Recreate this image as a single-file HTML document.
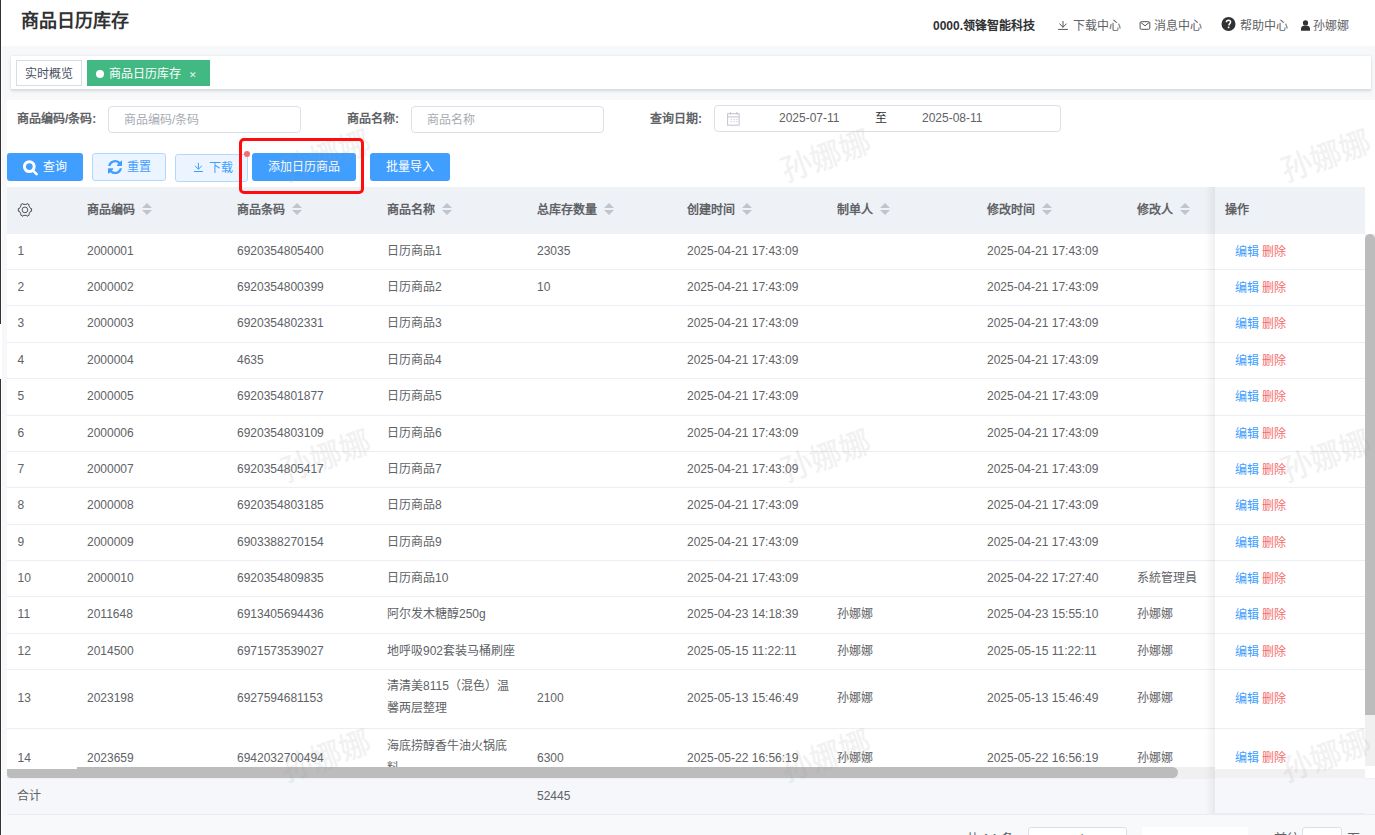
<!DOCTYPE html>
<html lang="zh-CN">
<head>
<meta charset="utf-8">
<style>
*{margin:0;padding:0;box-sizing:border-box}
html,body{width:1375px;height:835px;overflow:hidden;background:#fff}
body{position:relative;font-family:"Liberation Sans",sans-serif;color:#606266;font-size:12px}
.lline{position:absolute;left:0;width:1px;background:#333}
.gray{position:absolute;left:2px;right:0;top:46px;bottom:0;background:#f7f8fa}
.title{position:absolute;left:21px;top:9px;font-size:18px;font-weight:bold;color:#303133;line-height:24px}
.ico{position:absolute}
.hdr{position:absolute;top:17px;line-height:18px;font-size:12px;color:#606266;white-space:nowrap}
.tabbar{position:absolute;left:11px;top:56px;width:1360px;height:34px;background:#fff;border-bottom:1px solid #d8dce5;box-shadow:0 1px 3px 0 rgba(0,0,0,.12),0 0 3px 0 rgba(0,0,0,.04)}
.tab1{position:absolute;left:16px;top:60px;width:66px;height:26px;border:1px solid #d8dce5;background:#fff;color:#495060;font-size:12px;line-height:27.5px;text-align:center}
.tab2{position:absolute;left:87px;top:60px;width:123px;height:26px;background:#42b983;color:#fff;font-size:12px;line-height:27px}
.tab2 .dot{position:absolute;left:9px;top:9.9px;width:8px;height:8px;border-radius:50%;background:#fff}
.tab2 .tx{position:absolute;left:22.3px;top:1px}
.tab2 .x{position:absolute;left:102.3px;top:1.5px;font-size:9px;color:#e8f5ee}
.panel{position:absolute;left:7px;top:100px;right:0;bottom:0;background:#fff}
.lbl{position:absolute;top:110px;font-size:12px;font-weight:bold;color:#606266;line-height:18px;white-space:nowrap}
.inp{position:absolute;top:106px;height:27px;border:1px solid #dcdfe6;border-radius:4px;background:#fff;color:#c0c4cc;font-size:12px;line-height:25px;white-space:nowrap}
.ph{position:relative;top:1.3px;color:#a8abb2}
.btn{position:absolute;top:153px;height:28px;border-radius:3px;font-size:12px;line-height:28px;text-align:center;color:#fff;background:#409eff;white-space:nowrap}
.bt{position:absolute;top:0}
.btnp{background:#ecf5ff;border:1px solid #b3d8ff;color:#409eff;line-height:26px}
.table{position:absolute;left:7px;top:187px;width:1358px;height:580.2px;overflow:hidden;background:#fff}
.th{position:absolute;left:0;top:0;height:46.6px;width:100%;background:#eef1f6}
.th span{position:absolute;top:14px;font-weight:bold;color:#606266;line-height:18px;white-space:nowrap}
.gear{position:absolute}
.sort{display:inline-block;position:relative;width:10px;height:14px;margin-left:6.5px;vertical-align:-3px}
.sort b{position:absolute;left:0;width:0;height:0;border-left:5px solid transparent;border-right:5px solid transparent}
.sort .up{top:0;border-bottom:5px solid #c0c4cc}
.sort .dn{top:7px;border-top:5px solid #c0c4cc}
.row{position:absolute;left:0;width:100%;border-bottom:1px solid #ebeef5;background:#fff}
.row span{position:absolute;white-space:nowrap;line-height:18px;color:#606266}
.row span.nm{line-height:22px}
.fix{position:absolute;left:1215px;top:187px;width:150px;height:627.4px;background:#fff;overflow:hidden}
.fshadow{position:absolute;left:1205px;top:187px;width:10px;height:627.4px;background:linear-gradient(to right,rgba(0,0,0,0),rgba(0,0,0,.06))}
.fix .fh{position:absolute;left:0;top:0;width:100%;height:46.6px;background:#eef1f6}
.fix .fh span{position:absolute;left:10px;top:14px;font-weight:bold;line-height:18px}
.fix .fr{position:absolute;left:0;width:100%;border-bottom:1px solid #ebeef5;background:#fff}
.fix .fr span{position:absolute;left:20px;line-height:18px;white-space:nowrap}
.ed{color:#409eff}.de{color:#f56c6c}
.hscroll{position:absolute;left:7px;top:767.2px;width:1208px;height:10.6px;background:#f0f0f0}
.hthumb{position:absolute;left:0;top:0;width:1171px;height:100%;background:#bcbcbc;border-radius:0 6px 6px 4px}
.hnotch{position:absolute;left:0;top:0;width:70px;height:1.6px;background:#fff}
.vscroll{position:absolute;left:1365px;top:233.6px;width:10px;height:532.7px;background:#f0f0f0}
.vthumb{position:absolute;left:0;top:0;width:100%;height:481px;background:#bcbcbc;border-radius:6px 6px 0 0}
.sum{position:absolute;left:7px;top:777.8px;width:1368px;height:36.8px;background:#f5f7fa;border-bottom:1px solid #e9ecf2;border-top:1px solid #eef0f5}
.pg{position:absolute;left:2px;top:814.6px;right:0;bottom:0;background:#f8f9fb}
.pbox{position:absolute;top:827.4px;height:30px;background:#fff;border:1px solid #dcdfe6;border-radius:3px}
.ptx{position:absolute;top:830.4px;font-size:13px;line-height:18px;color:#606266;white-space:nowrap}
.sum span{position:absolute;top:8.2px;line-height:18px;color:#606266}
.redbox{position:absolute;left:238.5px;top:137.5px;width:125px;height:56px;border:3px solid #ff0d0d;border-radius:5px}
.reddot{position:absolute;left:243.5px;top:151px;width:6px;height:6px;border-radius:50%;background:#f56c6c}
.wm{position:absolute;font-size:31px;font-weight:400;color:#a0a0a0;-webkit-text-stroke:.35px #a0a0a0;opacity:.14;transform:rotate(-20deg);white-space:nowrap;pointer-events:none;line-height:30px}
</style>
</head>
<body>
<div class="gray"></div>
<div class="lline" style="top:0;height:324px"></div>
<div class="lline" style="top:379px;height:456px"></div>
<div class="title">商品日历库存</div>
<div class="hdr" style="left:933px;font-weight:bold;color:#303133">0000.领锋智能科技</div>
<svg class="ico" style="left:1056px;top:19px" width="14" height="14" viewBox="0 0 14 14"><path d="M7 2v6.5M3.4 4.6L7 8.2l3.6-3.6M2.1 10.4h9.8" fill="none" stroke="#555" stroke-width="1"/></svg>
<div class="hdr" style="left:1072.6px">下载中心</div>
<svg class="ico" style="left:1138px;top:20px" width="14" height="11" viewBox="0 0 14 11"><rect x="2.1" y="1.7" width="9.7" height="7.6" rx="1.2" fill="none" stroke="#555" stroke-width="1"/><path d="M3 2.6l4 3.2 4-3.2" fill="none" stroke="#555" stroke-width="1"/></svg>
<div class="hdr" style="left:1154.3px">消息中心</div>
<svg class="ico" style="left:1221px;top:17px" width="15" height="15" viewBox="0 0 15 15"><circle cx="7.5" cy="7" r="7" fill="#303133"/><path d="M5.4 5.3c0-1.3.9-2.1 2.1-2.1 1.3 0 2.1.8 2.1 1.9 0 1.4-1.6 1.6-1.6 2.9v.4" fill="none" stroke="#fff" stroke-width="1.5"/><rect x="6.8" y="9.6" width="1.6" height="1.6" fill="#fff"/></svg>
<div class="hdr" style="left:1240px">帮助中心</div>
<svg class="ico" style="left:1300px;top:19px" width="11" height="13" viewBox="0 0 11 13"><circle cx="5.5" cy="3.9" r="2.6" fill="#303133"/><path d="M1 11.8V9.6C1 7.8 2.4 6.7 4 6.7h3c1.6 0 3 1.1 3 2.9v2.2z" fill="#303133"/></svg>
<div class="hdr" style="left:1312.7px">孙娜娜</div>
<div class="tabbar"></div>
<div class="tab1">实时概览</div>
<div class="tab2"><i class="dot"></i><span class="tx">商品日历库存</span><span class="x">✕</span></div>
<div class="panel"></div>
<div class="lbl" style="left:17px">商品编码/条码:</div>
<div class="inp" style="left:108px;width:193px;padding-left:15px"><span class="ph">商品编码/条码</span></div>
<div class="lbl" style="left:347px">商品名称:</div>
<div class="inp" style="left:411px;width:193px;padding-left:15px"><span class="ph">商品名称</span></div>
<div class="lbl" style="left:650px">查询日期:</div>
<div class="inp" style="left:714px;top:105.2px;width:347px;color:#606266">
 <svg style="position:absolute;left:11px;top:4px" width="14" height="16" viewBox="0 0 14 16"><rect x="1.6" y="3.7" width="11.5" height="11.5" fill="none" stroke="#c0c4cc" stroke-width="1"/><path d="M1.6 6.9h11.5M4.4 2v2.5M10.9 2v2.5" stroke="#c0c4cc" stroke-width="1"/><path d="M4.5 9.4h1.2M7.5 9.4h1.2M10.3 9.4h1.2M4.5 11.6h1.2M7.5 11.6h1.2M10.3 11.6h1.2" stroke="#c0c4cc" stroke-width=".9"/></svg><span style="position:absolute;left:64px">2025-07-11</span>
 <span style="position:absolute;left:160px;color:#303133">至</span>
 <span style="position:absolute;left:207px">2025-08-11</span>
</div>
<div class="btn" style="left:7px;width:76px"><span class="bt" style="left:36px">查询</span><svg class="ico" style="left:15px;top:5px" width="18" height="18" viewBox="0 0 18 18"><circle cx="7.3" cy="8.6" r="4.9" fill="none" stroke="#fff" stroke-width="3"/><path d="M11.3 12.8l3.3 3.3" stroke="#fff" stroke-width="2.6" stroke-linecap="round"/></svg></div>
<div class="btn btnp" style="left:92px;width:74px"><span class="bt" style="left:33.8px">重置</span><svg class="ico" style="left:14.7px;top:5.9px" width="14.2" height="14.2" viewBox="0 0 1536 1536"><path fill="#409eff" d="M1511 928q0 5-1 7q-64 268-268 434.5T764 1536q-146 0-282.5-55T238 1324l-129 129q-19 19-45 19t-45-19t-19-45V960q0-26 19-45t45-19h448q26 0 45 19t19 45t-19 45l-137 137q71 66 161 102t187 36q134 0 250-65t186-179q11-17 53-117q8-23 30-23h192q13 0 22.5 9.5t9.5 22.5zm25-800v448q0 26-19 45t-45 19h-448q-26 0-45-19t-19-45t19-45l138-138Q969 256 768 256q-134 0-250 65T332 500q-11 17-53 117q-8 23-30 23H50q-13 0-22.5-9.5T18 608v-7q65-268 270-434.5T768 0q146 0 284 55.5T1297 212l130-129q19-19 45-19t45 19t19 45z"/></svg></div>
<div class="btn btnp" style="left:175px;width:73px;top:154px"><span class="bt" style="left:32.8px">下载</span><svg class="ico" style="left:16px;top:6px" width="12" height="14" viewBox="0 0 12 14"><path d="M6.4 1.9v6.4M3 4.8l3.4 3.4 3.5-3.4M1.9 10.5h9" fill="none" stroke="#409eff" stroke-width="1"/></svg></div>
<div class="btn" style="left:252px;width:104px">添加日历商品</div>
<div class="btn" style="left:370px;width:80px">批量导入</div>

<div class="table">
<div class="th">
<svg class="gear" style="left:9px;top:14px" width="18" height="18" viewBox="0 0 18 18"><path d="M15.55 7.50 L15.55 10.30 L14.61 10.09 L12.81 13.21 L13.46 13.92 L11.04 15.32 L10.75 14.40 L7.15 14.40 L6.86 15.32 L4.44 13.92 L5.09 13.21 L3.29 10.09 L2.35 10.30 L2.35 7.50 L3.29 7.71 L5.09 4.59 L4.44 3.88 L6.86 2.48 L7.15 3.40 L10.75 3.40 L11.04 2.48 L13.46 3.88 L12.81 4.59 L14.61 7.71Z" fill="none" stroke="#555" stroke-width="1"/><circle cx="8.95" cy="8.9" r="2.85" fill="none" stroke="#555" stroke-width="1"/></svg>
<span style="left:80px">商品编码<i class="sort"><b class="up"></b><b class="dn"></b></i></span>
<span style="left:230px">商品条码<i class="sort"><b class="up"></b><b class="dn"></b></i></span>
<span style="left:380px">商品名称<i class="sort"><b class="up"></b><b class="dn"></b></i></span>
<span style="left:530px">总库存数量<i class="sort"><b class="up"></b><b class="dn"></b></i></span>
<span style="left:680px">创建时间<i class="sort"><b class="up"></b><b class="dn"></b></i></span>
<span style="left:830px">制单人<i class="sort"><b class="up"></b><b class="dn"></b></i></span>
<span style="left:980px">修改时间<i class="sort"><b class="up"></b><b class="dn"></b></i></span>
<span style="left:1130px">修改人<i class="sort"><b class="up"></b><b class="dn"></b></i></span>
</div>
<div class="row" style="top:47.00px;height:36.00px">
<span style="left:10.6px;top:7.90px">1</span>
<span style="left:80px;top:7.90px">2000001</span>
<span style="left:230px;top:7.90px">6920354805400</span>
<span style="left:380px;top:7.90px">日历商品1</span>
<span style="left:530px;top:7.90px">23035</span>
<span style="left:680px;top:7.90px">2025-04-21 17:43:09</span>
<span style="left:980px;top:7.90px">2025-04-21 17:43:09</span>
</div>
<div class="row" style="top:83.00px;height:36.00px">
<span style="left:10.6px;top:7.90px">2</span>
<span style="left:80px;top:7.90px">2000002</span>
<span style="left:230px;top:7.90px">6920354800399</span>
<span style="left:380px;top:7.90px">日历商品2</span>
<span style="left:530px;top:7.90px">10</span>
<span style="left:680px;top:7.90px">2025-04-21 17:43:09</span>
<span style="left:980px;top:7.90px">2025-04-21 17:43:09</span>
</div>
<div class="row" style="top:119.00px;height:37.00px">
<span style="left:10.6px;top:8.40px">3</span>
<span style="left:80px;top:8.40px">2000003</span>
<span style="left:230px;top:8.40px">6920354802331</span>
<span style="left:380px;top:8.40px">日历商品3</span>
<span style="left:680px;top:8.40px">2025-04-21 17:43:09</span>
<span style="left:980px;top:8.40px">2025-04-21 17:43:09</span>
</div>
<div class="row" style="top:156.00px;height:36.00px">
<span style="left:10.6px;top:7.90px">4</span>
<span style="left:80px;top:7.90px">2000004</span>
<span style="left:230px;top:7.90px">4635</span>
<span style="left:380px;top:7.90px">日历商品4</span>
<span style="left:680px;top:7.90px">2025-04-21 17:43:09</span>
<span style="left:980px;top:7.90px">2025-04-21 17:43:09</span>
</div>
<div class="row" style="top:192.00px;height:37.00px">
<span style="left:10.6px;top:8.40px">5</span>
<span style="left:80px;top:8.40px">2000005</span>
<span style="left:230px;top:8.40px">6920354801877</span>
<span style="left:380px;top:8.40px">日历商品5</span>
<span style="left:680px;top:8.40px">2025-04-21 17:43:09</span>
<span style="left:980px;top:8.40px">2025-04-21 17:43:09</span>
</div>
<div class="row" style="top:229.00px;height:36.00px">
<span style="left:10.6px;top:7.90px">6</span>
<span style="left:80px;top:7.90px">2000006</span>
<span style="left:230px;top:7.90px">6920354803109</span>
<span style="left:380px;top:7.90px">日历商品6</span>
<span style="left:680px;top:7.90px">2025-04-21 17:43:09</span>
<span style="left:980px;top:7.90px">2025-04-21 17:43:09</span>
</div>
<div class="row" style="top:265.00px;height:36.00px">
<span style="left:10.6px;top:7.90px">7</span>
<span style="left:80px;top:7.90px">2000007</span>
<span style="left:230px;top:7.90px">6920354805417</span>
<span style="left:380px;top:7.90px">日历商品7</span>
<span style="left:680px;top:7.90px">2025-04-21 17:43:09</span>
<span style="left:980px;top:7.90px">2025-04-21 17:43:09</span>
</div>
<div class="row" style="top:301.00px;height:37.00px">
<span style="left:10.6px;top:8.40px">8</span>
<span style="left:80px;top:8.40px">2000008</span>
<span style="left:230px;top:8.40px">6920354803185</span>
<span style="left:380px;top:8.40px">日历商品8</span>
<span style="left:680px;top:8.40px">2025-04-21 17:43:09</span>
<span style="left:980px;top:8.40px">2025-04-21 17:43:09</span>
</div>
<div class="row" style="top:338.00px;height:36.00px">
<span style="left:10.6px;top:7.90px">9</span>
<span style="left:80px;top:7.90px">2000009</span>
<span style="left:230px;top:7.90px">6903388270154</span>
<span style="left:380px;top:7.90px">日历商品9</span>
<span style="left:680px;top:7.90px">2025-04-21 17:43:09</span>
<span style="left:980px;top:7.90px">2025-04-21 17:43:09</span>
</div>
<div class="row" style="top:374.00px;height:36.00px">
<span style="left:10.6px;top:7.90px">10</span>
<span style="left:80px;top:7.90px">2000010</span>
<span style="left:230px;top:7.90px">6920354809835</span>
<span style="left:380px;top:7.90px">日历商品10</span>
<span style="left:680px;top:7.90px">2025-04-21 17:43:09</span>
<span style="left:980px;top:7.90px">2025-04-22 17:27:40</span>
<span style="left:1130px;top:7.90px">系統管理員</span>
</div>
<div class="row" style="top:410.00px;height:37.00px">
<span style="left:10.6px;top:8.40px">11</span>
<span style="left:80px;top:8.40px">2011648</span>
<span style="left:230px;top:8.40px">6913405694436</span>
<span style="left:380px;top:8.40px">阿尔发木糖醇250g</span>
<span style="left:680px;top:8.40px">2025-04-23 14:18:39</span>
<span style="left:830px;top:8.40px">孙娜娜</span>
<span style="left:980px;top:8.40px">2025-04-23 15:55:10</span>
<span style="left:1130px;top:8.40px">孙娜娜</span>
</div>
<div class="row" style="top:447.00px;height:36.00px">
<span style="left:10.6px;top:7.90px">12</span>
<span style="left:80px;top:7.90px">2014500</span>
<span style="left:230px;top:7.90px">6971573539027</span>
<span style="left:380px;top:7.90px">地呼吸902套装马桶刷座</span>
<span style="left:680px;top:7.90px">2025-05-15 11:22:11</span>
<span style="left:830px;top:7.90px">孙娜娜</span>
<span style="left:980px;top:7.90px">2025-05-15 11:22:11</span>
<span style="left:1130px;top:7.90px">孙娜娜</span>
</div>
<div class="row" style="top:483.00px;height:59.00px">
<span style="left:10.6px;top:19.40px">13</span>
<span style="left:80px;top:19.40px">2023198</span>
<span style="left:230px;top:19.40px">6927594681153</span>
<span class="nm" style="left:380px;top:5.40px">清清美8115（混色）温<br>馨两层整理</span>
<span style="left:530px;top:19.40px">2100</span>
<span style="left:680px;top:19.40px">2025-05-13 15:46:49</span>
<span style="left:830px;top:19.40px">孙娜娜</span>
<span style="left:980px;top:19.40px">2025-05-13 15:46:49</span>
<span style="left:1130px;top:19.40px">孙娜娜</span>
</div>
<div class="row" style="top:542.00px;height:61.00px">
<span style="left:10.6px;top:19.50px">14</span>
<span style="left:80px;top:19.50px">2023659</span>
<span style="left:230px;top:19.50px">6942032700494</span>
<span class="nm" style="left:380px;top:5.50px">海底捞醇香牛油火锅底<br>料</span>
<span style="left:530px;top:19.50px">6300</span>
<span style="left:680px;top:19.50px">2025-05-22 16:56:19</span>
<span style="left:830px;top:19.50px">孙娜娜</span>
<span style="left:980px;top:19.50px">2025-05-22 16:56:19</span>
<span style="left:1130px;top:19.50px">孙娜娜</span>
</div>
</div>
<div class="sum"><span style="left:9.8px">合计</span><span style="left:530px">52445</span></div>
<div class="hscroll"><div class="hthumb"></div><div class="hnotch"></div></div>
<div class="fshadow"></div>
<div class="fix"><div class="fh"><span>操作</span></div>
<div class="fr" style="top:47.00px;height:36.00px"><span style="top:8.80px"><b class="ed" style="font-weight:normal">编辑</b> <b class="de" style="font-weight:normal">删除</b></span></div>
<div class="fr" style="top:83.00px;height:36.00px"><span style="top:8.80px"><b class="ed" style="font-weight:normal">编辑</b> <b class="de" style="font-weight:normal">删除</b></span></div>
<div class="fr" style="top:119.00px;height:37.00px"><span style="top:9.30px"><b class="ed" style="font-weight:normal">编辑</b> <b class="de" style="font-weight:normal">删除</b></span></div>
<div class="fr" style="top:156.00px;height:36.00px"><span style="top:8.80px"><b class="ed" style="font-weight:normal">编辑</b> <b class="de" style="font-weight:normal">删除</b></span></div>
<div class="fr" style="top:192.00px;height:37.00px"><span style="top:9.30px"><b class="ed" style="font-weight:normal">编辑</b> <b class="de" style="font-weight:normal">删除</b></span></div>
<div class="fr" style="top:229.00px;height:36.00px"><span style="top:8.80px"><b class="ed" style="font-weight:normal">编辑</b> <b class="de" style="font-weight:normal">删除</b></span></div>
<div class="fr" style="top:265.00px;height:36.00px"><span style="top:8.80px"><b class="ed" style="font-weight:normal">编辑</b> <b class="de" style="font-weight:normal">删除</b></span></div>
<div class="fr" style="top:301.00px;height:37.00px"><span style="top:9.30px"><b class="ed" style="font-weight:normal">编辑</b> <b class="de" style="font-weight:normal">删除</b></span></div>
<div class="fr" style="top:338.00px;height:36.00px"><span style="top:8.80px"><b class="ed" style="font-weight:normal">编辑</b> <b class="de" style="font-weight:normal">删除</b></span></div>
<div class="fr" style="top:374.00px;height:36.00px"><span style="top:8.80px"><b class="ed" style="font-weight:normal">编辑</b> <b class="de" style="font-weight:normal">删除</b></span></div>
<div class="fr" style="top:410.00px;height:37.00px"><span style="top:9.30px"><b class="ed" style="font-weight:normal">编辑</b> <b class="de" style="font-weight:normal">删除</b></span></div>
<div class="fr" style="top:447.00px;height:36.00px"><span style="top:8.80px"><b class="ed" style="font-weight:normal">编辑</b> <b class="de" style="font-weight:normal">删除</b></span></div>
<div class="fr" style="top:483.00px;height:59.00px"><span style="top:20.30px"><b class="ed" style="font-weight:normal">编辑</b> <b class="de" style="font-weight:normal">删除</b></span></div>
<div class="fr" style="top:542.00px;height:61.00px"><span style="top:20.40px"><b class="ed" style="font-weight:normal">编辑</b> <b class="de" style="font-weight:normal">删除</b></span></div>
<div style="position:absolute;left:0;top:582.00px;width:100%;height:9px;background:#f1f1f1"></div>
<div style="position:absolute;left:0;top:590.80px;width:100%;height:36.6px;background:#f5f7fa;border-bottom:1px solid #e9ecf2"></div>
</div>
<div class="vscroll"><div class="vthumb"></div></div>
<div class="pg"></div><span class="ptx" style="left:966px">共 14 条</span><div class="pbox" style="left:1027.5px;width:99px"><span style="position:absolute;left:34px;top:4px;font-size:13px;line-height:18px;color:#606266">10条/页</span></div><div style="position:absolute;left:1142px;top:827.2px;width:106px;height:30px;background:#fff"></div><span class="ptx" style="left:1274px">前往</span><div class="pbox" style="left:1301.8px;width:40.7px"></div><span class="ptx" style="left:1347px">页</span>
<div class="wm" style="left:280px;top:141.5px">孙娜娜</div>
<div class="wm" style="left:780px;top:141.5px">孙娜娜</div>
<div class="wm" style="left:1280px;top:141.5px">孙娜娜</div>
<div class="wm" style="left:280px;top:441.5px">孙娜娜</div>
<div class="wm" style="left:780px;top:441.5px">孙娜娜</div>
<div class="wm" style="left:1280px;top:441.5px">孙娜娜</div>
<div class="wm" style="left:280px;top:741.5px">孙娜娜</div>
<div class="wm" style="left:780px;top:741.5px">孙娜娜</div>
<div class="wm" style="left:1280px;top:741.5px">孙娜娜</div>
<div class="redbox"></div><div class="reddot"></div>
</body>
</html>
